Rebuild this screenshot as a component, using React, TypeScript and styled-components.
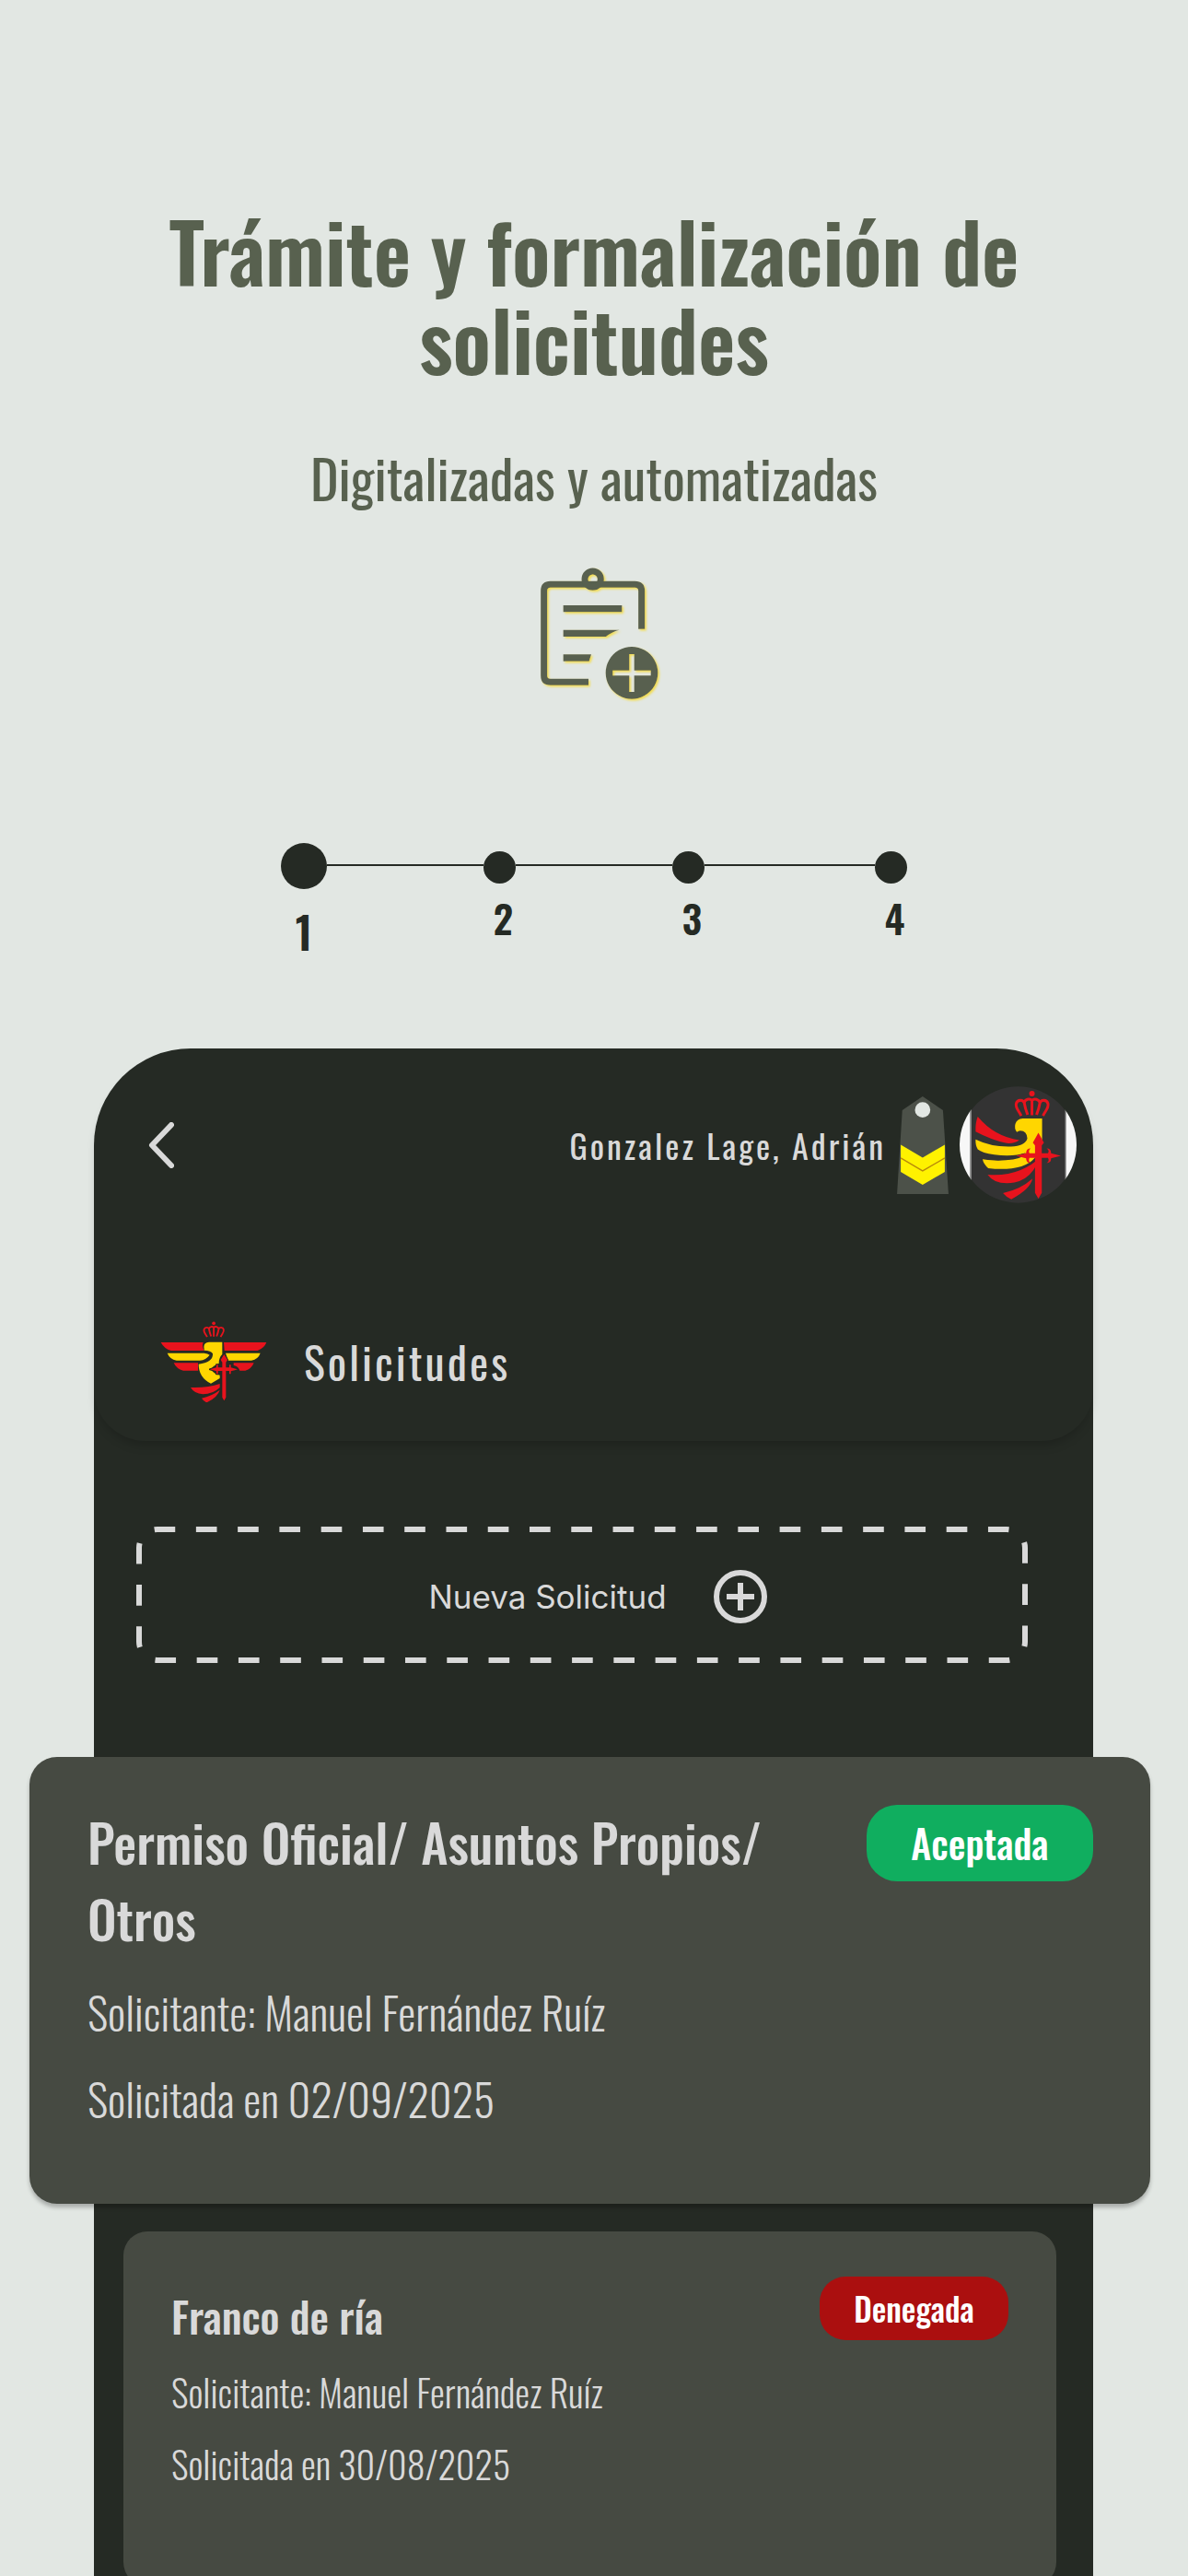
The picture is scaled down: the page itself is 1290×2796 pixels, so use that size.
import React from "react";
import styled, { createGlobalStyle } from "styled-components";

const color = {
  paper: "#e2e7e3",
  olive: "#58614f",
  ink: "#252a24",
  card: "#464a42",
  light: "#d9d9d9",
  green: "#10ae5f",
  red: "#ab0f0f",
};

const GlobalStyle = createGlobalStyle`
  *, *::before, *::after { box-sizing: border-box; }
  body { margin: 0; background: ${color.paper}; font-family: Oswald, "Roboto Condensed", sans-serif; }
  h1, h2, h3, p, ol { margin: 0; padding: 0; font-weight: 400; }
  button { border: 0; padding: 0; background: none; cursor: pointer; }
  svg { display: block; flex: none; }
`;

const Page = styled.div`
  height: 100vh;
  overflow: hidden;
  display: flex;
  flex-direction: column;
`;

const Hero = styled.header`
  display: flex;
  flex-direction: column;
  align-items: center;
  flex: none;
  padding: 223px 120px 0;
  color: ${color.olive};
  text-align: center;
`;

const Title = styled.h1`
  font-size: 88px;
  line-height: 96px;
  font-weight: 600;
`;

const Subtitle = styled.p`
  margin: 71px 0 66px;
  font-size: 58px;
  line-height: 64px;
`;

const Stepper = styled.ol`
  display: flex;
  align-items: flex-start;
  flex: none;
  align-self: center;
  width: 680px;
  max-width: 100%;
  margin: 155px 0 101px;
  list-style: none;
  color: ${color.ink};
`;

const Step = styled.li<{ $active?: boolean }>`
  display: flex;
  flex-direction: column;
  align-items: center;
  flex: none;
  width: ${(p) => (p.$active ? 50 : 35)}px;
  height: 122px;
  gap: ${(p) => (p.$active ? 22 : 13)}px;
  padding-top: ${(p) => (p.$active ? 0 : 9)}px;
  font-size: ${(p) => (p.$active ? 48 : 42)}px;
  line-height: 48px;
  font-weight: 600;

  &::before {
    content: "";
    width: 100%;
    aspect-ratio: 1;
    border-radius: 50%;
    background: ${color.ink};
  }
`;

const StepNumber = styled.span<{ $active?: boolean }>`
  padding-left: ${(p) => (p.$active ? 0 : 8)}px;
`;

const Connector = styled.li<{ $grow: number }>`
  flex: ${(p) => p.$grow} 1 0;
  height: 2px;
  margin-top: 23px;
  background: ${color.ink};
`;

const Phone = styled.main`
  flex: 1 0 auto;
  margin: 0 103px 0 102px;
  border-radius: 105px 105px 0 0;
  background: ${color.ink};
  color: ${color.light};
`;

const PhoneHeader = styled.div`
  padding: 41px 18px 42px 59px;
  border-radius: 105px 105px 56px 56px;
  box-shadow: 0 8px 12px -4px rgba(0, 0, 0, 0.2);
`;

const TopBar = styled.div`
  display: flex;
  align-items: center;
  justify-content: space-between;
`;

const BackButton = styled.button`
  color: ${color.light};
`;

const User = styled.div`
  display: flex;
  align-items: center;
  gap: 12px;
`;

const UserName = styled.span`
  font-size: 36px;
  line-height: 48px;
  letter-spacing: 3px;
`;

const Section = styled.div`
  display: flex;
  align-items: center;
  gap: 40px;
  margin: 128px 0 0 13px;
`;

const SectionTitle = styled.h2`
  font-size: 48px;
  line-height: 64px;
  letter-spacing: 3px;
`;

const NewRequest = styled.button`
  position: relative;
  display: flex;
  align-items: center;
  justify-content: center;
  gap: 51px;
  width: calc(100% - 117px);
  height: 148px;
  margin: 93px 0 102px 46px;
  padding: 3px 0 0 34px;
  color: ${color.light};
  font-family: Inter, sans-serif;
  font-size: 35px;
  line-height: 48px;
`;

const DashedFrame = styled.svg`
  position: absolute;
  inset: 0;
  width: 100%;
  height: 100%;
  overflow: visible;

  rect {
    width: calc(100% - 6px);
    height: calc(100% - 6px);
  }
`;

const Card = styled.article<{ $featured?: boolean }>`
  position: relative;
  display: flex;
  align-items: flex-start;
  justify-content: space-between;
  gap: 40px;
  margin: ${(p) => (p.$featured ? "0 -62px 30px -70px" : "0 40px 0 32px")};
  padding: ${(p) => (p.$featured ? "50px 62px 67px 63px" : "47px 52px 94px 52px")};
  border-radius: ${(p) => (p.$featured ? 30 : 26)}px;
  background: ${color.card};
  box-shadow: ${(p) => (p.$featured ? "0 4px 4px rgba(0, 0, 0, 0.25)" : "none")};
`;

const CardBody = styled.div<{ $featured?: boolean }>`
  padding-top: ${(p) => (p.$featured ? 0 : 14)}px;
`;

const CardTitle = styled.h3<{ $featured?: boolean }>`
  margin-bottom: 14px;
  font-size: ${(p) => (p.$featured ? 56 : 46)}px;
  line-height: ${(p) => (p.$featured ? 83 : 60)}px;
  font-weight: 500;
`;

const Detail = styled.p<{ $featured?: boolean }>`
  font-size: ${(p) => (p.$featured ? 48 : 40)}px;
  line-height: ${(p) => (p.$featured ? 94 : 78)}px;
  font-weight: 300;
`;

const Badge = styled.span<{ $featured?: boolean; $tone: string }>`
  flex: none;
  width: ${(p) => (p.$featured ? 246 : 205)}px;
  margin-top: 2px;
  border-radius: ${(p) => (p.$featured ? 33 : 28)}px;
  background: ${(p) => p.$tone};
  color: #fff;
  font-size: ${(p) => (p.$featured ? 42 : 35)}px;
  line-height: ${(p) => (p.$featured ? 83 : 69)}px;
  font-weight: 500;
  text-align: center;
`;

function ClipboardIcon() {
  return (
    <svg width="140" height="144" viewBox="45 48 420 432" overflow="visible" aria-hidden="true">
      <defs>
        <filter id="glow" x="-10%" y="-10%" width="125%" height="125%">
          <feDropShadow dx="5" dy="5" stdDeviation="3" floodColor="#f2dc4e" floodOpacity="1" />
        </filter>
      </defs>
      <g filter="url(#glow)">
        <path
          fill="none"
          stroke="currentColor"
          strokeWidth="21"
          d="M237 421H113Q92 421 92 400V124Q92 103 113 103H388Q410 103 410 124V248"
        />
        <circle cx="251" cy="86" r="26" fill="none" stroke="currentColor" strokeWidth="21" />
        <path
          fill="currentColor"
          d="M155 171H346V193H155Z M155 251H338Q315 256 294 273H155Z M155 331H246L239 353H155Z"
        />
        <path
          fill="currentColor"
          fillRule="evenodd"
          d="M378 306a85 85 0 1 0 0.1 0Z M370 330H386V383H440V400H386V453H370V400H316V383H370Z"
        />
      </g>
    </svg>
  );
}

function BackIcon() {
  return (
    <svg width="28" height="50" viewBox="0 0 28 50" fill="none" aria-hidden="true">
      <path d="M25 3L4 25L25 47" stroke="currentColor" strokeWidth="6" strokeLinecap="round" strokeLinejoin="round" />
    </svg>
  );
}

function PlusIcon() {
  return (
    <svg width="58" height="58" viewBox="0 0 58 58" fill="none" stroke="currentColor" strokeWidth="6" aria-hidden="true">
      <circle cx="29" cy="29" r="26" />
      <path d="M29 14V44M14 29H44" />
    </svg>
  );
}

function Insignia() {
  return (
    <svg width="56" height="106" viewBox="42 90 167 317" role="img" aria-label="Cabo primero">
      <path fill="#4c5149" d="M125 90L191 135L209 407H42L59 135Z" />
      <circle cx="125" cy="134" r="25" fill={color.paper} />
      <path fill="#fff200" d="M54 247L125 289L197 247V335L125 377L54 335Z" />
      <path fill="none" stroke="#b98a0a" strokeWidth="4" d="M54 290L125 332L197 290" />
    </svg>
  );
}

function Crown() {
  return (
    <g fill="none" stroke="#e8131d" strokeWidth="9">
      <circle cx="482" cy="82" r="9" fill="#e8131d" stroke="none" />
      <path d="M447 154C440 138 427 128 431 114C435 101 453 101 457 112C459 124 464 140 468 151" />
      <path d="M518 154C525 138 538 128 534 114C530 101 512 101 508 112C506 124 501 140 497 151" />
      <path d="M482 152V100M456 112C460 100 474 96 482 104C490 96 504 100 509 112" />
    </g>
  );
}

function Avatar() {
  return (
    <svg width="127" height="127" viewBox="247 58 380 380" role="img" aria-label="Foto de perfil">
      <defs>
        <clipPath id="avatar-round">
          <circle cx="437" cy="248" r="190" />
        </clipPath>
      </defs>
      <circle cx="437" cy="248" r="189" fill="#333" />
      <g clipPath="url(#avatar-round)">
        <path fill="#f7f7f7" d="M247 58H281V438H247Z M594 58H627V438H594Z" />
        <path fill="#a9a9a9" d="M281 58H285V438H281Z M590 58H594V438H590Z" />
      </g>
      <Crown />
      <path fill="#e8131d" d="M306 157Q360 222 441 233Q425 245 400 243Q350 232 299 205Q298 175 306 157Z" />
      <path
        fill="#ffd600"
        d="M299 231Q350 256 414 254Q460 252 467 228Q466 202 444 202Q438 202 433 207Q424 196 428 181Q433 164 452 163H515V235L492 290Q475 310 448 318Q400 332 340 324Q325 312 321 293Q365 302 420 294Q450 288 462 274Q420 288 360 280Q320 275 306 263Q298 250 299 231Z"
      />
      <path fill="none" stroke="#333" strokeWidth="8" d="M306 289Q365 300 420 292Q440 288 454 281" />
      <path fill="#e8131d" d="M338 345Q430 352 494 302V318Q472 360 425 371Q362 380 338 345Z" />
      <path fill="#e8131d" d="M388 405Q445 393 484 358Q476 393 415 425Q398 418 388 405Z" />
      <path
        fill="#e8131d"
        d="M503 209L521 241L514 250V276H534Q540 266 530 260Q545 260 544 276L576 284L544 292Q545 308 530 307Q540 302 534 291H514V404L503 423L492 404V291H474Q469 302 478 307Q463 308 463 292L431 284L463 276Q463 260 478 260Q469 266 474 276H492V250L485 241Z"
      />
    </svg>
  );
}

function Emblem() {
  return (
    <svg width="116" height="88" viewBox="42 42 346 264" aria-hidden="true">
      <g transform="translate(-83.500 -2) scale(.62)">
        <Crown />
      </g>
      <path
        fill="#e8131d"
        d="M43 111H181Q176 124 184 138H76Q54 132 43 111Z M248 111H387Q380 130 358 138H250Z M85 178H164V203H116Q94 198 85 178Z M280 178H346Q338 198 318 203H300Q296 190 280 186Z"
      />
      <path
        fill="#ffd600"
        d="M64 146H184Q196 148 202 152Q190 168 170 170H94Q72 166 64 146Z M254 146H367Q360 166 338 170H262Z M184 131Q180 112 200 110H243V150Q232 160 232 180Q214 186 206 198Q214 214 235 218V228L206 245Q166 225 166 182Q214 176 212 148Q206 137 184 137Z"
      />
      <path fill="#e8131d" d="M140 258Q195 260 235 246V258Q212 280 180 280Q152 278 140 258Z M176 293Q212 284 235 266Q228 290 192 307Q182 302 176 293Z" />
      <path
        fill="#e8131d"
        stroke={color.ink}
        strokeWidth="6"
        strokeLinejoin="round"
        paintOrder="stroke"
        d="M249 150L260 168L255 176V193H266V184H271V193L293 199L271 205V214H266V204H255V290L249 301L243 290V204H229V214H224V205L203 199L224 193V184H229V193H243V176L238 168Z"
      />
    </svg>
  );
}

interface RequestProps {
  title: string;
  applicant: string;
  date: string;
  status: string;
  tone: string;
  featured?: boolean;
}

function RequestCard({ title, applicant, date, status, tone, featured }: RequestProps) {
  return (
    <Card $featured={featured}>
      <CardBody $featured={featured}>
        <CardTitle $featured={featured}>{title}</CardTitle>
        <Detail $featured={featured}>Solicitante: {applicant}</Detail>
        <Detail $featured={featured}>Solicitada en {date}</Detail>
      </CardBody>
      <Badge $featured={featured} $tone={tone}>
        {status}
      </Badge>
    </Card>
  );
}

export default function App() {
  return (
    <Page>
      <GlobalStyle />
      <Hero>
        <Title>Trámite y formalización de solicitudes</Title>
        <Subtitle>Digitalizadas y automatizadas</Subtitle>
        <ClipboardIcon />
      </Hero>
      <Stepper>
        <Step $active aria-current="step">
          <StepNumber $active>1</StepNumber>
        </Step>
        <Connector $grow={170} aria-hidden="true" />
        <Step>
          <StepNumber>2</StepNumber>
        </Step>
        <Connector $grow={170} aria-hidden="true" />
        <Step>
          <StepNumber>3</StepNumber>
        </Step>
        <Connector $grow={185} aria-hidden="true" />
        <Step>
          <StepNumber>4</StepNumber>
        </Step>
      </Stepper>
      <Phone>
        <PhoneHeader>
          <TopBar>
            <BackButton type="button" aria-label="Volver">
              <BackIcon />
            </BackButton>
            <User>
              <UserName>Gonzalez Lage, Adrián</UserName>
              <Insignia />
              <Avatar />
            </User>
          </TopBar>
          <Section>
            <Emblem />
            <SectionTitle>Solicitudes</SectionTitle>
          </Section>
        </PhoneHeader>
        <NewRequest type="button">
          <DashedFrame aria-hidden="true">
            <rect
              x="3"
              y="3"
              rx="20"
              fill="none"
              stroke={color.light}
              strokeWidth="6"
              pathLength={96}
              strokeDasharray="1 1"
              strokeDashoffset="0.15"
            />
          </DashedFrame>
          Nueva Solicitud
          <PlusIcon />
        </NewRequest>
        <RequestCard
          featured
          title="Permiso Oficial/ Asuntos Propios/ Otros"
          applicant="Manuel Fernández Ruíz"
          date="02/09/2025"
          status="Aceptada"
          tone={color.green}
        />
        <RequestCard
          title="Franco de ría"
          applicant="Manuel Fernández Ruíz"
          date="30/08/2025"
          status="Denegada"
          tone={color.red}
        />
      </Phone>
    </Page>
  );
}
